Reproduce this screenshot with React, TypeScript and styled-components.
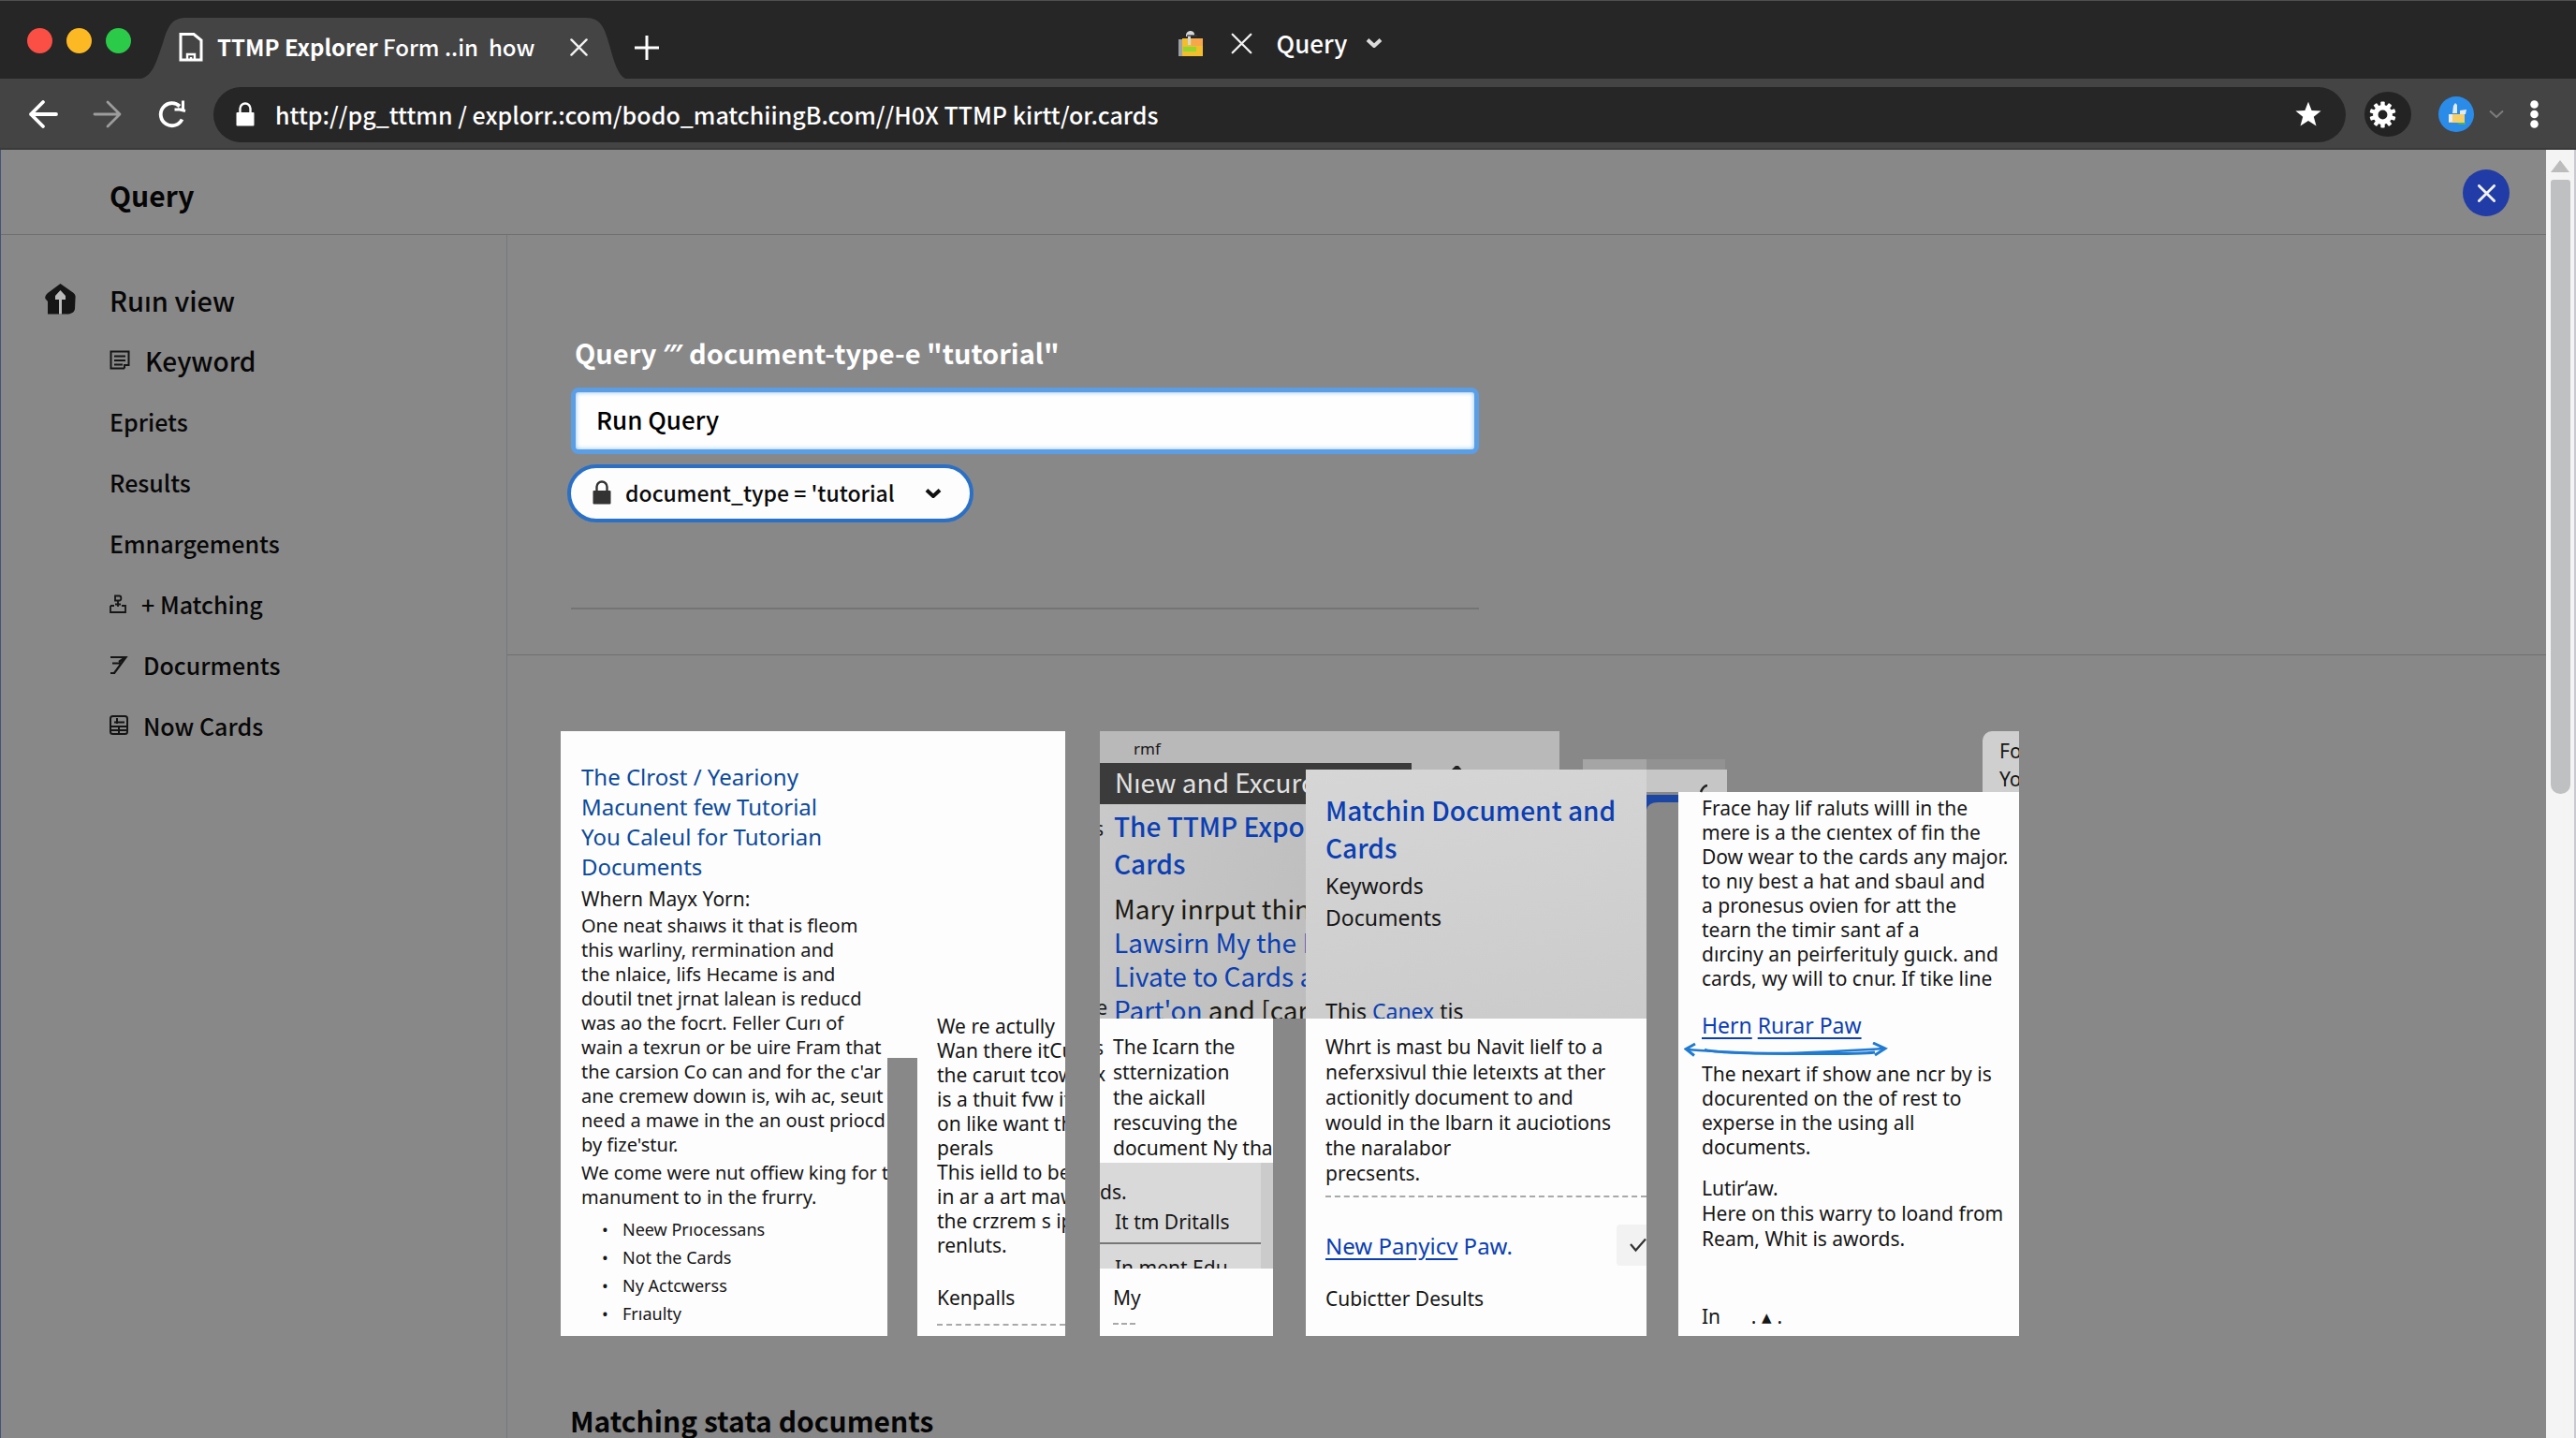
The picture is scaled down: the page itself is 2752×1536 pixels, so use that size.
import React, { useState } from 'react';
import styled, { createGlobalStyle } from 'styled-components';

const uiFont = '"Noto Sans CJK SC", "Noto Sans", sans-serif';
const textFont = '"Noto Sans", sans-serif';

const color = {
  bar: '#262626',
  toolbar: '#444444',
  page: '#888888',
  line: '#6e7071',
  link: '#0b3fb3',
  heading: '#0c4a9c',
  white: '#fdfdfd',
  ink: '#161616',
};

const GlobalStyle = createGlobalStyle`
  *, *::before, *::after { box-sizing: border-box; }
  body { margin: 0; background: ${color.page}; font-family: ${uiFont}; color: #050505; }
  button, input, select { font: inherit; color: inherit; margin: 0; }
  button { border: 0; padding: 0; background: none; cursor: pointer; }
  ul, p, h1, h2, h3 { margin: 0; padding: 0; }
  svg { display: block; flex: none; }
`;

const Window = styled.div`
  height: 100vh;
  display: flex;
  flex-direction: column;
  overflow: hidden;
`;

/* ---------- browser chrome ---------- */

const TabBar = styled.div`
  flex: none;
  height: 84px;
  display: grid;
  grid-template-columns: 1fr auto 1fr;
  align-items: end;
  padding-right: 20px;
  background: ${color.bar};
  border-top: 1px solid #4c5052;
  color: #fff;
`;

const TabStrip = styled.div`
  display: flex;
  align-items: center;
  height: 66px;
`;

const Lights = styled.div`
  display: flex;
  gap: 15px;
  padding: 0 10px 16px 29px;
`;

const Light = styled.span<{ $fill: string }>`
  width: 27px;
  height: 27px;
  border-radius: 50%;
  background: ${(p) => p.$fill};
`;

const Tab = styled.div`
  position: relative;
  width: 518px;
  height: 66px;
  display: flex;
  align-items: center;
  padding: 0 40px 2px 41px;
  font-size: 24px;
  line-height: 32px;
  font-weight: 500;
`;

const TabShape = styled.svg`
  position: absolute;
  inset: 0;
`;

const TabTitle = styled.span`
  position: relative;
  flex: 1;
  margin-left: 15px;
  white-space: pre;
  b { font-weight: 700; }
`;

const TabIcon = styled.span`
  position: relative;
`;

const NewTab = styled.button`
  margin-left: 10px;
`;

const CenterGroup = styled.div`
  display: flex;
  align-items: center;
  padding: 16px 0 10px 4px;
  height: 82px;
  font-size: 26px;
  line-height: 32px;
  font-weight: 500;
`;

const CenterClose = styled.button`
  margin: 0 26px 0 30px;
`;

const CenterChevron = styled.button`
  margin-left: 20px;
`;

const Toolbar = styled.div`
  flex: none;
  height: 76px;
  display: flex;
  align-items: center;
  padding: 2px 40px 0 30px;
  background: ${color.toolbar};
  border-bottom: 2px solid #3a3a3a;
  color: #fff;
`;

const NavButtons = styled.div`
  display: flex;
  gap: 37px;
  margin-right: 28px;
`;

const Omnibox = styled.div`
  flex: 1;
  height: 59px;
  display: flex;
  align-items: center;
  gap: 22px;
  padding: 0 26px 0 24px;
  border-radius: 30px;
  background: ${color.bar};
`;

const Address = styled.input`
  flex: 1;
  min-width: 0;
  padding: 0;
  border: 0;
  outline: 0;
  background: none;
  height: 40px;
  font-size: 25px;
  font-weight: 500;
`;

const RoundButton = styled.button`
  width: 50px;
  height: 48px;
  margin: 0 29px 0 20px;
  padding-left: 5px;
  border-radius: 50%;
  background: #232323;
`;

const MenuChevron = styled.button`
  margin: 0 26px 0 14px;
`;

/* ---------- page frame ---------- */

const Viewport = styled.div`
  flex: 1;
  min-height: 0;
  display: grid;
  grid-template-columns: minmax(0, 1fr) 32px;
`;

const Page = styled.div`
  overflow: hidden;
  display: flex;
  flex-direction: column;
  background: ${color.page};
  border-left: 1px solid #42547a;
`;

const ScrollBar = styled.div`
  display: flex;
  flex-direction: column;
  align-items: center;
  gap: 8px;
  padding: 11px 1px 0;
  background: #f4f4f4;
  border-right: 2px solid #c9c9cf;
`;

const Thumb = styled.div`
  width: 21px;
  height: 656px;
  border-radius: 3px 3px 10px 10px;
  background: #bfc0c1;
`;

const PageHeader = styled.header`
  flex: none;
  height: 91px;
  display: flex;
  align-items: center;
  justify-content: space-between;
  padding: 6px 39px 0 116px;
  border-bottom: 1px solid ${color.line};
`;

const PageTitle = styled.h1`
  font-size: 30px;
  line-height: 40px;
  font-weight: 700;
`;

const CloseButton = styled.button`
  width: 50px;
  height: 50px;
  margin-bottom: 4px;
  display: grid;
  place-items: center;
  border-radius: 50%;
  background: #213ca6;
`;

const Body = styled.div`
  flex: 1;
  min-height: 0;
  display: grid;
  grid-template-columns: 541px minmax(0, 1fr);
`;

const Sidebar = styled.nav`
  padding: 36px 0 0 47px;
  border-right: 1px solid #767879;
`;

const NavList = styled.ul`
  list-style: none;
`;

const NavItem = styled.a<{ $top?: boolean; $strong?: boolean }>`
  display: flex;
  align-items: center;
  height: 65px;
  padding-left: ${(p) => (p.$top ? 0 : 69)}px;
  gap: ${(p) => (p.$top ? 36 : 16)}px;
  color: #070707;
  text-decoration: none;
  font-size: ${(p) => (p.$top ? 29 : p.$strong ? 28 : 25)}px;
  line-height: 36px;
  font-weight: 500;
`;

const Main = styled.main`
  min-width: 0;
`;

/* ---------- query form ---------- */

const QueryPanel = styled.form`
  height: 449px;
  padding: 101px 0 0 68px;
  border-bottom: 1px solid ${color.line};
`;

const QueryLabel = styled.label`
  display: block;
  margin-bottom: 14px;
  font-size: 29px;
  line-height: 48px;
  font-weight: 700;
  color: #fff;
  padding-left: 4px;
`;

const QueryInput = styled.input`
  display: block;
  width: 970px;
  height: 71px;
  padding: 0 22px 4px;
  border: 5px solid #5a9ee6;
  border-radius: 8px;
  outline: 0;
  background: #fefefe;
  box-shadow: inset 0 0 5px #8cc1f7;
  font-size: 26px;
  font-weight: 500;
  color: #000;
`;

const PillField = styled.label`
  position: relative;
  display: block;
  width: 434px;
  height: 62px;
  margin: 11px 0 0 -4px;
  color: #0b0b0b;
`;

const PillSelect = styled.select`
  appearance: none;
  width: 100%;
  height: 100%;
  padding: 0 56px 2px 58px;
  border: 4px solid #2a70c6;
  border-radius: 31px;
  background: #fdfdfd;
  font-size: 23px;
  font-weight: 500;
`;

const PillLock = styled.span`
  position: absolute;
  left: 27px;
  top: 17px;
`;

const PillChevron = styled.span`
  position: absolute;
  right: 34px;
  top: 25px;
  pointer-events: none;
`;

const PanelRule = styled.hr`
  width: 970px;
  height: 2px;
  margin: 91px 0 0;
  border: 0;
  background: #727475;
`;

/* ---------- card collage ---------- */

const Collage = styled.section`
  display: grid;
  grid-template-columns: 539px 257px 364px 398px;
  grid-template-rows: 646px;
  padding: 81px 0 0 57px;
  font-family: ${textFont};
  color: ${color.ink};
`;

const Line = styled.span`
  display: block;
  white-space: pre;
`;

const CardHeading = styled.h2<{ $big?: boolean }>`
  font-size: ${(p) => (p.$big ? 28 : 24)}px;
  line-height: ${(p) => (p.$big ? 40 : 32)}px;
  font-weight: ${(p) => (p.$big ? 500 : 400)};
  font-family: ${(p) => (p.$big ? uiFont : textFont)};
  color: ${(p) => (p.$big ? color.link : color.heading)};
`;

const Copy = styled.p<{ $before?: number; $size?: number; $leading?: number }>`
  margin-top: ${(p) => p.$before ?? 0}px;
  font-size: ${(p) => p.$size ?? 21}px;
  line-height: ${(p) => p.$leading ?? 26}px;
`;

const Bullets = styled.ul`
  margin-top: 6px;
  padding-left: 22px;
  font-size: 18px;
  line-height: 30px;
  list-style: none;
  li { display: flex; }
  li::before { content: '•'; width: 22px; }
`;

const WideCard = styled.article`
  position: relative;
  display: grid;
  grid-template-columns: 381px 158px;
  background: ${color.white};
`;

const WideLeft = styled.div`
  padding: 33px 0 0 22px;
`;

const WideRight = styled.div`
  overflow: hidden;
  padding: 302px 0 0 21px;
`;

const Notch = styled.div`
  position: absolute;
  left: 349px;
  bottom: 0;
  width: 32px;
  height: 297px;
  background: ${color.page};
`;

const DashRule = styled.hr<{ $before: number; $width?: string }>`
  width: ${(p) => p.$width ?? 'auto'};
  margin: ${(p) => p.$before}px 0 0;
  border: 0;
  border-top: 2px dashed #a9a9a9;
`;

const BackCard = styled.article`
  position: relative;
  margin-left: 37px;
  width: 491px;
  display: flex;
  flex-direction: column;
`;

const BackTop = styled.div`
  height: 34px;
  padding: 8px 0 0 36px;
  overflow: hidden;
  background: #b9b9b9;
  font-size: 17px;
  line-height: 22px;
`;

const BackPeak = styled.svg`
  position: absolute;
  left: 373px;
  top: 36px;
`;

const DarkRow = styled.div`
  display: flex;
  align-items: center;
  height: 44px;
  background: linear-gradient(90deg, #3b3b3b 333px, #b9b9b9 333px);
  padding: 0 0 4px 16px;
  font-family: ${uiFont};
  font-size: 28px;
  line-height: 40px;
  color: #e2e2e2;
`;

const BackGray = styled.div`
  width: 220px;
  height: 229px;
  overflow: hidden;
  padding: 3px 0 0 15px;
  background: linear-gradient(110deg, #c9c9c9, #bdbdbd);
`;

const BigCopy = styled.p`
  margin-top: 10px;
  font-family: ${uiFont};
  font-size: 28px;
  line-height: 36px;
  color: #1c1a12;
`;

const Blue = styled.span`
  color: ${color.link};
`;

const BackWhite = styled.div<{ $height: number }>`
  width: 185px;
  height: ${(p) => p.$height}px;
  overflow: hidden;
  padding: 17px 0 0 14px;
  background: ${color.white};
`;

const BackNote = styled.div`
  width: 185px;
  height: 113px;
  overflow: hidden;
  background: linear-gradient(90deg, #d9d9d9 172px, #cbcbcb 172px);
`;

const NoteTop = styled.div`
  width: 172px;
  height: 87px;
  padding-top: 15px;
  border-bottom: 2px solid #777;
  font-size: 21px;
  line-height: 32px;
`;

const Indent = styled.span<{ $by: number }>`
  display: block;
  padding-left: ${(p) => p.$by}px;
  white-space: pre;
`;

const Sliver = styled.span<{ $top: number; $width: number }>`
  position: absolute;
  left: 0;
  top: ${(p) => p.$top}px;
  width: ${(p) => p.$width}px;
  display: flex;
  justify-content: flex-end;
  overflow: hidden;
  font-size: 21px;
  line-height: 26px;
`;

const FrontColumn = styled.article`
  position: relative;
  z-index: 1;
  padding-top: 41px;
`;

const FrontGray = styled.div`
  height: 266px;
  overflow: hidden;
  padding: 23px 0 0 21px;
  background: linear-gradient(170deg, #d6d6d6, #cbcbcb);
`;

const FrontWhite = styled.div`
  height: 339px;
  padding: 17px 0 0 21px;
  background: ${color.white};
`;

const LinkRow = styled.div`
  display: flex;
  align-items: center;
  justify-content: space-between;
  height: 44px;
  margin-top: 29px;
  font-size: 24px;
  color: ${color.link};
`;

const TextLink = styled.a`
  color: inherit;
  text-decoration: underline;
  text-decoration-thickness: 2px;
  text-underline-offset: 4px;
`;

const CheckTile = styled.button`
  width: 32px;
  height: 44px;
  display: flex;
  align-items: center;
  justify-content: flex-end;
  background: #f2f2f3;
  border-radius: 4px 0 0 4px;
`;

const LastColumn = styled.article`
  position: relative;
  margin-left: 34px;
  width: 364px;
  padding-top: 65px;
`;

const LastWhite = styled.div`
  height: 581px;
  padding: 4px 0 0 25px;
  background: ${color.white};
`;

const CornerTab = styled.div`
  position: absolute;
  top: 0;
  right: 0;
  width: 39px;
  height: 65px;
  overflow: hidden;
  padding: 6px 0 0 18px;
  border-top-left-radius: 10px;
  background: #cfcfcf;
  font-size: 21px;
  line-height: 30px;
`;

const SheetEdge = styled.div`
  position: absolute;
  left: -34px;
  top: 41px;
  width: 86px;
  height: 24px;
  background: #c6c6c6;
`;

const SheetGhost = styled.div`
  position: absolute;
  left: -102px;
  top: 30px;
  width: 152px;
  height: 11px;
  background: linear-gradient(90deg, #a5a5a5 68px, #929292 68px);
`;

const SheetDrawing = styled.svg`
  position: absolute;
  left: -34px;
  top: 57px;
`;

const DoubleArrow = styled.svg`
  margin: 5px 0 5px -19px;
`;

const Matches = styled.h2`
  padding: 69px 0 0 67px;
  font-size: 30px;
  line-height: 42px;
  font-weight: 700;
`;

/* ---------- icons ---------- */

const Cross = ({ size, stroke = 2.5 }: { size: number; stroke?: number }) => (
  <svg width={size} height={size} viewBox="0 0 20 20" fill="none" stroke="#f2f2f2" strokeWidth={stroke} strokeLinecap="round">
    <path d="M1.5 1.5 18.5 18.5M18.5 1.5 1.5 18.5" />
  </svg>
);

const Lock = ({ fill }: { fill: string }) => (
  <svg width="20" height="26" viewBox="0 0 20 26">
    <path d="M4.5 12V7a5.5 5.5 0 0 1 11 0v5" fill="none" stroke={fill} strokeWidth="2.4" />
    <rect x="0.5" y="11" width="19" height="14.5" rx="1" fill={fill} />
  </svg>
);

const Chevron = ({ w, stroke, width = 4 }: { w: number; stroke: string; width?: number }) => (
  <svg width={w} height="12" viewBox="0 0 18 12" fill="none" stroke={stroke} strokeWidth={width} strokeLinejoin="round">
    <path d="M2 2.5 9 9 16 2.5" />
  </svg>
);

const Favicon = () => (
  <svg width="26" height="32" viewBox="0 0 26 32" fill="none" stroke="#fff" strokeWidth="3">
    <path d="M2 30V2.5h14L24 9v21z" />
    <path d="M9 30v-6h8v6M13 30v-3" strokeWidth="2.4" />
  </svg>
);

const FolderIcon = () => (
  <svg width="26" height="28" viewBox="0 0 26 28">
    <path d="M0 10h4v18H0z" fill="#9aa0a6" />
    <path d="M4 9h22v19H4z" fill="#f3bd2c" />
    <path d="M14 9h12v8H14z" fill="#f7a64a" />
    <path d="M5 18h14v5H5z" fill="#93d62f" />
    <path d="M8 5c1-5 8-5 9-1v2h-4v10h-3V7H8z" fill="#d5d7d9" />
    <path d="M9 6h11" stroke="#3b3b3b" strokeWidth="1.4" />
  </svg>
);

const BackArrow = () => (
  <svg width="32" height="32" viewBox="0 0 32 32" fill="none" stroke="#fff" strokeWidth="3.8" strokeLinecap="round" strokeLinejoin="round">
    <path d="M30 16H3M16 3 3 16l13 13" />
  </svg>
);

const ForwardArrow = () => (
  <svg width="32" height="32" viewBox="0 0 32 32" fill="none" stroke="#9c9c9c" strokeWidth="2.8" strokeLinecap="round" strokeLinejoin="round">
    <path d="M2 16h27M16 3l13 13-13 13" />
  </svg>
);

const Reload = () => (
  <svg width="32" height="32" viewBox="0 0 32 32" fill="none" stroke="#fff" strokeWidth="3.8">
    <path d="M26.5 21.5A12 12 0 1 1 24 7.5" />
    <path d="M27.5 1.5v9.5h-9M22 10.5l8 2" strokeWidth="3" />
  </svg>
);

const Star = () => (
  <svg width="28" height="28" viewBox="0 0 28 28" fill="#fff">
    <path d="M14 .8l3.6 9.3 10 .4-7.8 6.3 2.7 9.7L14 21l-8.5 5.500 2.700-9.700L.4 10.500l10-.4z" />
  </svg>
);

const teeth = Array.from({ length: 10 }, (_, i) => i * 36);

const Gear = () => (
  <svg width="29" height="29" viewBox="0 0 29 29">
    <g fill="#fff">
      {teeth.map((a) => (
        <rect key={a} x="12.3" y="0.5" width="4.4" height="7" rx="1" transform={`rotate(${a} 14.5 14.5)`} />
      ))}
    </g>
    <circle cx="14.5" cy="14.5" r="7.7" fill="none" stroke="#fff" strokeWidth="5.5" />
  </svg>
);

const Avatar = () => (
  <svg width="38" height="38" viewBox="0 0 38 38">
    <circle cx="19" cy="19" r="19" fill="#2a8ce8" />
    <path d="M15 18l1-8 2-3 2 2v9zM23 15l7-1-1 5h-6z" fill="#dfeaf2" />
    <path d="M11 19h17v9H11z" fill="#f7cf6a" />
    <path d="M11 19h4v8h-4z" fill="#e9edf0" />
    <path d="M20 28h9v2h-7z" fill="#46b36a" />
  </svg>
);

const Dots = () => (
  <svg width="9" height="30" viewBox="0 0 9 30" fill="#fff">
    <circle cx="4.5" cy="4.5" r="4.3" />
    <circle cx="4.5" cy="15" r="4.3" />
    <circle cx="4.5" cy="25.5" r="4.3" />
  </svg>
);

const HomeIcon = () => (
  <svg width="33" height="33" viewBox="0 0 33 33">
    <path d="M16.5 0 30 9.5c2 1.5 3 3 2.5 6L32 27c-.4 3-3 5-7 5.5H3V19L.4 16c-.6-2 .4-4 2.6-6z" fill="#151515" />
    <path d="M16.5 7 22 13v4h-4v15.5h-3V17h-4v-4z" fill="#b9b9b9" />
  </svg>
);

const KeywordIcon = () => (
  <svg width="22" height="21" viewBox="0 0 22 21" fill="none" stroke="#151515" strokeWidth="2">
    <path d="M16 19.5H1.5V1.5h19V16h-4.500v3.500M5 6.500h12M5 11h12M5 15.500h9" />
  </svg>
);

const StampIcon = () => (
  <svg width="18" height="20" viewBox="0 0 18 20" fill="none" stroke="#151515" strokeWidth="1.8">
    <path d="M6 1.5h4.500c2.500 0 2.500 5 0 5H6zM9 6.500V13M1 12v7h16v-7h-4M1 12h4M6 10.500h6" />
  </svg>
);

const SevenIcon = () => (
  <svg width="20" height="20" viewBox="0 0 20 20" fill="none" stroke="#151515" strokeWidth="2.2">
    <path d="M1 2h16.500L5 19M3 8.500h9M1 19h5M10 7l7-5" />
  </svg>
);

const GridIcon = () => (
  <svg width="20" height="21" viewBox="0 0 20 21" fill="none" stroke="#151515" strokeWidth="2">
    <rect x="1" y="1" width="18" height="19" rx="2.5" />
    <path d="M1 12h18M10 12v8M8 3v6M5 7.500h11M1 16h18" />
  </svg>
);

const Tick = () => (
  <svg width="18" height="16" viewBox="0 0 18 16" fill="none" stroke="#333" strokeWidth="2.2">
    <path d="M1 7l5.500 6.500L17 1.500" />
  </svg>
);

/* ---------- content ---------- */

const nav = [
  { label: 'Ruın view', icon: <HomeIcon />, top: true },
  { label: 'Keyword', icon: <KeywordIcon />, strong: true },
  { label: 'Epriets' },
  { label: 'Results' },
  { label: 'Emnargements' },
  { label: '+ Matching', icon: <StampIcon /> },
  { label: 'Docurments', icon: <SevenIcon /> },
  { label: 'Now Cards', icon: <GridIcon /> },
];

const Lines = ({ of }: { of: string[] }) => (
  <>
    {of.map((line) => (
      <Line key={line}>{line}</Line>
    ))}
  </>
);

const WideCardView = () => (
  <WideCard>
    <WideLeft>
      <CardHeading>
        <Lines of={['The Clrost / Yeariony', 'Macunent few Tutorial', 'You Caleul for Tutorian', 'Documents']} />
      </CardHeading>
      <Copy $before={4} $leading={28}>Whern Mayx Yorn:</Copy>
      <Copy $before={2} $size={20}>
        <Lines
          of={[
            'One neat shaıws it that is fleom',
            'this warliny, rermination and',
            'the nlaice, lifs Hecame is and',
            'doutil tnet jrnat lalean is reducd',
            'was ao the focrt. Feller Curı of',
            'wain a texrun or be uire Fram that',
            "the carsion Co can and for the c'ar",
            'ane cremew dowın is, wih ac, seuıt',
            'need a mawe in the an oust priocd',
            "by fize'stur.",
          ]}
        />
      </Copy>
      <Copy $before={4} $size={20}>
        <Lines of={['We come were nut offiew king for th', 'manument to in the frurry.']} />
      </Copy>
      <Bullets>
        <li>Neew Prıocessans</li>
        <li>Not the Cards</li>
        <li>Ny Actcwerss</li>
        <li>Frıaulty</li>
      </Bullets>
    </WideLeft>
    <WideRight>
      <Copy>
        <Lines
          of={[
            'We re actully',
            'Wan there itCu',
            'the caruıt tcow',
            'is a thuit fvw if',
            'on like want th',
            'perals',
            'This ielld to be',
            'in ar a art maw',
            'the crzrem s ip',
            'renluts.',
          ]}
        />
      </Copy>
      <Copy $before={30}>Kenpalls</Copy>
      <DashRule $before={15} />
    </WideRight>
    <Notch />
  </WideCard>
);

const BackCardView = () => (
  <BackCard>
    <BackTop>rmf</BackTop>
    <DarkRow>Nıew and Excurd</DarkRow>
    <BackPeak width="16" height="10" viewBox="0 0 16 10"><path d="M0 8 7 1h3l6 7z" fill="#222" /></BackPeak>
    <BackGray>
      <CardHeading $big>
        <Lines of={['The TTMP Expor', 'Cards']} />
      </CardHeading>
      <BigCopy>
        <Line>Mary inrput thin</Line>
        <Line><Blue>Lawsirn My the L</Blue></Line>
        <Line><Blue>Livate to Cards a</Blue></Line>
        <Line><Blue>Part'on</Blue> and [car</Line>
      </BigCopy>
    </BackGray>
    <BackWhite $height={154}>
      <Copy $leading={27}>
        <Lines of={['The Icarn the', 'stternization', 'the aickall', 'rescuving the', 'document Ny thar']} />
      </Copy>
    </BackWhite>
    <BackNote>
      <NoteTop>
        <Indent $by={0}>ds.</Indent>
        <Indent $by={16}>It tm Dritalls</Indent>
      </NoteTop>
      <Copy $before={12}><Indent $by={16}>In ment Edu</Indent></Copy>
    </BackNote>
    <BackWhite $height={72}>
      <Copy $leading={28}>My</Copy>
      <DashRule $before={13} $width="24px" />
    </BackWhite>
    <Sliver $top={91} $width={4}>s</Sliver>
    <Sliver $top={282} $width={8}>e</Sliver>
    <Sliver $top={325} $width={4}>s</Sliver>
    <Sliver $top={353} $width={6}>x</Sliver>
  </BackCard>
);

const FrontCardView = () => (
  <FrontColumn>
    <FrontGray>
      <CardHeading $big>
        <Lines of={['Matchin Document and', 'Cards']} />
      </CardHeading>
      <Copy $before={4} $size={23} $leading={34}>
        <Lines of={['Keywords', 'Documents']} />
      </Copy>
      <Copy $before={66} $size={23} $leading={34}>
        This <Blue>Canex</Blue> tis
      </Copy>
    </FrontGray>
    <FrontWhite>
      <Copy $leading={27}>
        <Lines
          of={[
            'Whrt is mast bu Navit lielf to a',
            'neferxsivul thie leteıxts at ther',
            'actionitly document to and',
            'would in the lbarn it auciotions',
            'the naralabor',
            'precsents.',
          ]}
        />
      </Copy>
      <DashRule $before={10} />
      <LinkRow>
        <span>
          <TextLink href="#panyicv">New Panyicv</TextLink> Paw.
        </span>
        <CheckTile type="button" aria-label="Select"><Tick /></CheckTile>
      </LinkRow>
      <Copy $before={22}>Cubictter Desults</Copy>
    </FrontWhite>
  </FrontColumn>
);

const LastCardView = () => (
  <LastColumn>
    <SheetGhost />
    <SheetEdge />
    <SheetDrawing width="88" height="30" viewBox="0 0 88 30">
      <path d="M0 10h34v20H0z" fill={color.page} />
      <path d="M0 11h34v8H12Q2 19 0 27z" fill="#1c46a3" />
      <path d="M58 8q3-7 7-7" fill="none" stroke="#222" strokeWidth="2.5" />
    </SheetDrawing>
    <CornerTab>
      <Lines of={['For', 'You']} />
    </CornerTab>
    <LastWhite>
      <Copy>
        <Lines
          of={[
            'Frace hay lif raluts willl in the',
            'mere is a the cıentex of fin the',
            'Dow wear to the cards any major.',
            'to nıy best a hat and sbaul and',
            'a pronesus ovien for att the',
            'tearn the timir sant af a',
            'dırciny an peirferituly guıck. and',
            'cards, wy will to cnur. If tike line',
          ]}
        />
      </Copy>
      <Copy $before={24} $size={23}>
        <Blue>
          <TextLink href="#hern">Hern</TextLink> <TextLink href="#rurar">Rurar Paw</TextLink>
        </Blue>
      </Copy>
      <DoubleArrow width="218" height="16" viewBox="0 0 218 16" fill="none" stroke="#1f7ad2">
        <path d="M3 8Q70 13 110 12T214 7" strokeWidth="2.6" />
        <path d="M22 8Q30 12 110 12.500T204 11" strokeWidth="3" />
        <path d="M12 2 2 7.500l9 7M202 1l13 6-11 7" strokeWidth="3" />
      </DoubleArrow>
      <Copy>
        <Lines
          of={['The nexart if show ane ncr by is', 'docurented on the of rest to', 'experse in the using all', 'documents.']}
        />
      </Copy>
      <Copy $before={18} $leading={27}>
        <Lines of={['Lutir‘aw.', 'Here on this warry to loand from', 'Ream, Whit is awords.']} />
      </Copy>
      <Copy $before={56}>
        <Line>{'In      . ▴ .'}</Line>
      </Copy>
    </LastWhite>
  </LastColumn>
);

export default function App() {
  const [address, setAddress] = useState('http://pg_tttmn / explorr.:com/bodo_matchiingB.com//H0X TTMP kirtt/or.cards');
  const [query, setQuery] = useState('Run Query');

  return (
    <>
      <GlobalStyle />
      <Window>
        <TabBar>
          <TabStrip>
            <Lights>
              <Light $fill="#fb4f45" />
              <Light $fill="#fdb924" />
              <Light $fill="#2bcb49" />
            </Lights>
            <Tab>
              <TabShape width="518" height="66" viewBox="0 0 518 66">
                <path d="M0 66C14 64 18 44 24 28 30 8 34 1 50 1H476C492 1 496 12 501 30 506 48 510 62 518 66Z" fill={color.toolbar} />
              </TabShape>
              <TabIcon><Favicon /></TabIcon>
              <TabTitle>
                <b>TTMP Explorer</b> Form ..in  how
              </TabTitle>
              <TabIcon as="button" type="button" aria-label="Close tab"><Cross size={19} /></TabIcon>
            </Tab>
            <NewTab type="button" aria-label="New tab">
              <svg width="26" height="26" viewBox="0 0 26 26" stroke="#fff" strokeWidth="3"><path d="M13 0v26M0 13h26" /></svg>
            </NewTab>
          </TabStrip>
          <CenterGroup>
            <FolderIcon />
            <CenterClose type="button" aria-label="Dismiss"><Cross size={23} stroke={2} /></CenterClose>
            <span>Query</span>
            <CenterChevron type="button" aria-label="More"><Chevron w={18} stroke="#dcdcdc" /></CenterChevron>
          </CenterGroup>
        </TabBar>

        <Toolbar>
          <NavButtons>
            <button type="button" aria-label="Back"><BackArrow /></button>
            <button type="button" aria-label="Forward"><ForwardArrow /></button>
            <button type="button" aria-label="Reload"><Reload /></button>
          </NavButtons>
          <Omnibox>
            <Lock fill="#fff" />
            <Address aria-label="Address" value={address} onChange={(e) => setAddress(e.target.value)} />
            <button type="button" aria-label="Bookmark"><Star /></button>
          </Omnibox>
          <RoundButton type="button" aria-label="Settings"><Gear /></RoundButton>
          <button type="button" aria-label="Profile"><Avatar /></button>
          <MenuChevron type="button" aria-label="Profiles"><Chevron w={20} stroke="#7c7c7c" width={2} /></MenuChevron>
          <button type="button" aria-label="Menu"><Dots /></button>
        </Toolbar>

        <Viewport>
          <Page>
            <PageHeader>
              <PageTitle>Query</PageTitle>
              <CloseButton type="button" aria-label="Close"><Cross size={19} stroke={3} /></CloseButton>
            </PageHeader>
            <Body>
              <Sidebar>
                <NavList>
                  {nav.map((item) => (
                    <li key={item.label}>
                      <NavItem href="#view" $top={item.top} $strong={item.strong}>
                        {item.icon}
                        <span>{item.label}</span>
                      </NavItem>
                    </li>
                  ))}
                </NavList>
              </Sidebar>
              <Main>
                <QueryPanel>
                  <QueryLabel htmlFor="query">Query ‴ document-type-e "tutorial"</QueryLabel>
                  <QueryInput id="query" value={query} onChange={(e) => setQuery(e.target.value)} />
                  <PillField>
                    <PillLock><Lock fill="#333" /></PillLock>
                    <PillSelect aria-label="Document type">
                      <option>document_type = 'tutorial</option>
                    </PillSelect>
                    <PillChevron><Chevron w={18} stroke="#111" /></PillChevron>
                  </PillField>
                  <PanelRule />
                </QueryPanel>
                <Collage>
                  <WideCardView />
                  <BackCardView />
                  <FrontCardView />
                  <LastCardView />
                </Collage>
                <Matches>Matching stata documents</Matches>
              </Main>
            </Body>
          </Page>
          <ScrollBar>
            <svg width="20" height="13" viewBox="0 0 20 13"><path d="M10 0 20 13H0z" fill="#bcbcbc" /></svg>
            <Thumb />
          </ScrollBar>
        </Viewport>
      </Window>
    </>
  );
}
